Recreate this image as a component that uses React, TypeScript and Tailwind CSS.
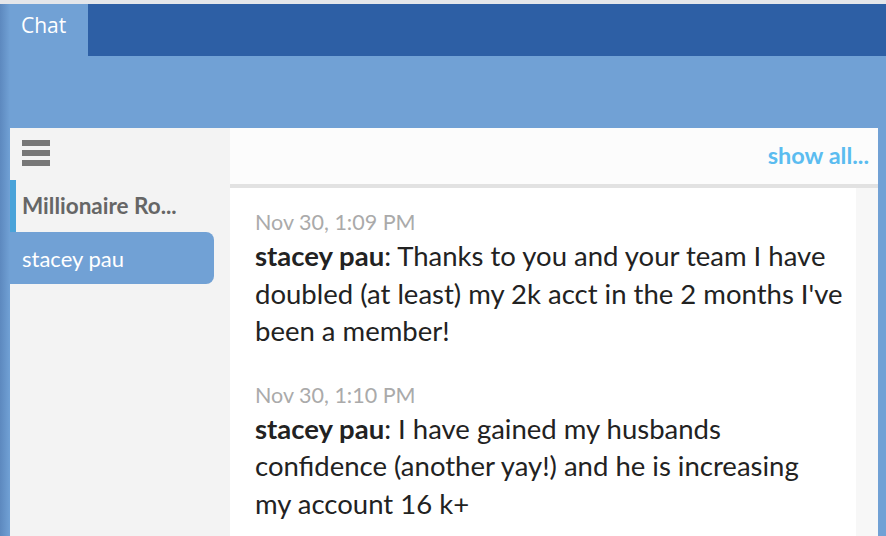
import React from "react";

const messages = [
  {
    time: "Nov 30, 1:09 PM",
    name: "stacey pau",
    text: "Thanks to you and your team I have\ndoubled (at least) my 2k acct in the 2 months I've\nbeen a member!",
  },
  {
    time: "Nov 30, 1:10 PM",
    name: "stacey pau",
    text: "I have gained my husbands\nconfidence (another yay!) and he is increasing\nmy account 16 k+",
  },
];

export default function App() {
  return (
    <div className="relative w-[886px] h-[536px] overflow-hidden bg-[#71a1d5] flex flex-col" style={{ fontFamily: "Lato, 'Open Sans', sans-serif" }}>
      <div className="h-[4px] bg-[#e4e6ea]" />
      <div className="h-[52px] bg-[#2d5fa5] flex">
        <div className="w-[88px] bg-[#71a1d5] text-white text-[21px] pl-[21px] pt-[6px] leading-[30px]" style={{ fontFamily: "'Open Sans', sans-serif" }}>
          Chat
        </div>
      </div>
      <div className="h-[72px]" />
      <div className="flex-1 flex ml-[10px] mr-[8px] min-h-0">
        <div className="w-[220px] bg-[#f3f3f3] flex flex-col">
          <div className="h-[52px] pl-[12px] pt-[12px] flex flex-col gap-[4px]">
            <div className="w-[28px] h-[6px] bg-[#777777]" />
            <div className="w-[28px] h-[6px] bg-[#777777]" />
            <div className="w-[28px] h-[6px] bg-[#777777]" />
          </div>
          <div className="h-[52px] border-l-[6px] border-[#4aa3d9] pl-[6px] flex items-center">
            <span className="text-[22.5px] font-bold text-[#666666] whitespace-nowrap">Millionaire Ro...</span>
          </div>
          <div className="h-[52px] w-[204px] bg-[#71a1d5] rounded-r-[8px] pl-[12px] flex items-center text-white text-[22px]">
            stacey pau
          </div>
        </div>
        <div className="flex-1 flex flex-col bg-white min-w-0">
          <div className="h-[60px] bg-[#fcfcfc] border-b-[4px] border-[#e2e2e2] flex items-center justify-end pr-[9px]">
            <span className="text-[#5bbcf0] text-[23.5px] font-bold">show all...</span>
          </div>
          <div className="flex-1 flex min-h-0">
            <div className="flex-1 pl-[25px] pr-[4px] pt-[19px] flex flex-col gap-[30px]">
              {messages.map((m, i) => (
                <div key={i} className="flex flex-col">
                  <div className="text-[#aaaaaa] text-[21.5px] leading-[30px]">{m.time}</div>
                  <div className="text-[#222222] text-[27.5px] leading-[37.5px] whitespace-pre-line">
                    <span className="font-bold">{m.name}</span>: {m.text}
                  </div>
                </div>
              ))}
            </div>
            <div className="w-[22px] bg-[#f7f7f7]" />
          </div>
        </div>
      </div>
      <div className="pointer-events-none absolute left-0 top-[4px] bottom-0 w-[10px] bg-gradient-to-r from-[rgba(20,50,110,0.22)] to-[rgba(20,50,110,0)]" />
    </div>
  );
}
